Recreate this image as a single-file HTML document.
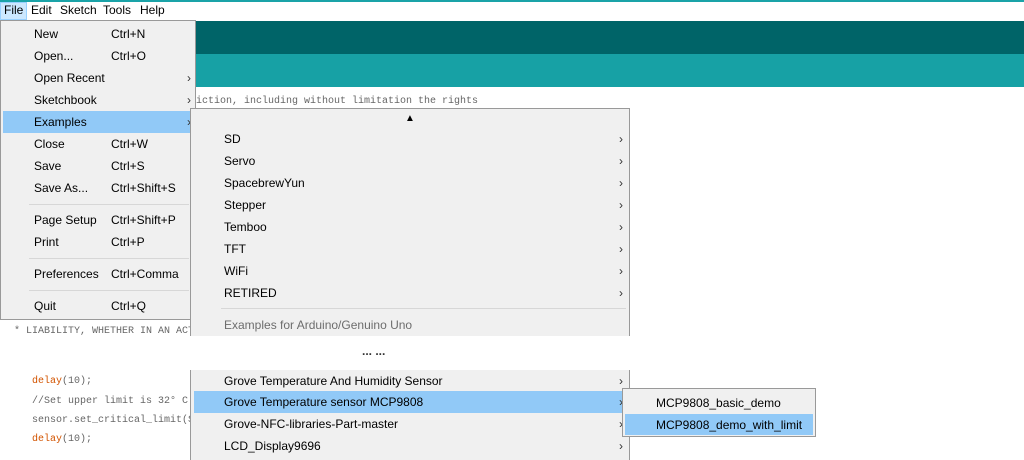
<!DOCTYPE html>
<html><head><style>
*{margin:0;padding:0;box-sizing:border-box}
body{width:1024px;height:451px;position:relative;overflow:hidden;background:#fff;font-family:"Liberation Sans",sans-serif;font-size:12px;color:#000}
.a{position:absolute;white-space:nowrap}
.code{font-family:"Liberation Mono","Noto Serif CJK SC",monospace;font-size:10px;color:#666}
.menu{position:absolute;background:#f0f0f0;border:1px solid #999}
.it{position:absolute;height:22px;line-height:22px;white-space:nowrap}
.ar{position:absolute;font-size:12px;color:#333}
.sep{position:absolute;height:1px;background:#d7d7d7}
.hl{position:absolute;background:#91c9f7}
</style></head><body>
<div class="a" style="left:0;top:0;width:1024px;height:2px;background:#1aa3a8"></div>
<div class="a" style="left:0;top:2px;width:27px;height:18px;background:#cce8ff;border:1px solid #99d1ff"></div>
<div class="a" style="left:4px;top:3px;font-size:12px">File</div>
<div class="a" style="left:31px;top:3px">Edit</div>
<div class="a" style="left:60px;top:3px">Sketch</div>
<div class="a" style="left:103px;top:3px">Tools</div>
<div class="a" style="left:140px;top:3px">Help</div>
<div class="a" style="left:196px;top:21px;width:828px;height:33px;background:#006468"></div>
<div class="a" style="left:196px;top:54px;width:828px;height:33px;background:#17a1a5"></div>
<div class="a code" style="left:190px;top:96px">riction, including without limitation the rights</div>
<div class="a code" style="left:14px;top:326px">* LIABILITY, WHETHER IN AN ACT</div>
<div class="a code" style="left:32px;top:376px"><span style="color:#d35400">delay</span>(10);</div>
<div class="a code" style="left:32px;top:396px">//Set upper limit is 32° C</div>
<div class="a code" style="left:32px;top:415px">sensor.set_critical_limit(S</div>
<div class="a code" style="left:32px;top:434px"><span style="color:#d35400">delay</span>(10);</div>

<div class="menu" style="left:0;top:20px;width:196px;height:300px">
<div class="hl" style="left:2px;top:90px;width:190px;height:22px"></div>
<div class="it" style="left:33px;top:2px">New</div><div class="it" style="left:110px;top:2px">Ctrl+N</div>
<div class="it" style="left:33px;top:24px">Open...</div><div class="it" style="left:110px;top:24px">Ctrl+O</div>
<div class="it" style="left:33px;top:46px">Open Recent</div><div class="ar" style="left:186px;top:50px">›</div>
<div class="it" style="left:33px;top:68px">Sketchbook</div><div class="ar" style="left:186px;top:72px">›</div>
<div class="it" style="left:33px;top:90px">Examples</div><div class="ar" style="left:186px;top:94px">›</div>
<div class="it" style="left:33px;top:112px">Close</div><div class="it" style="left:110px;top:112px">Ctrl+W</div>
<div class="it" style="left:33px;top:134px">Save</div><div class="it" style="left:110px;top:134px">Ctrl+S</div>
<div class="it" style="left:33px;top:156px">Save As...</div><div class="it" style="left:110px;top:156px">Ctrl+Shift+S</div>
<div class="sep" style="left:28px;top:183px;width:160px"></div>
<div class="it" style="left:33px;top:188px">Page Setup</div><div class="it" style="left:110px;top:188px">Ctrl+Shift+P</div>
<div class="it" style="left:33px;top:210px">Print</div><div class="it" style="left:110px;top:210px">Ctrl+P</div>
<div class="sep" style="left:28px;top:237px;width:160px"></div>
<div class="it" style="left:33px;top:242px">Preferences</div><div class="it" style="left:110px;top:242px">Ctrl+Comma</div>
<div class="sep" style="left:28px;top:269px;width:160px"></div>
<div class="it" style="left:33px;top:274px">Quit</div><div class="it" style="left:110px;top:274px">Ctrl+Q</div>
</div>

<div class="menu" style="left:190px;top:108px;width:440px;height:228px;border-bottom:none">
<div class="a" style="left:214px;top:4px;font-size:10px">▲</div>
<div class="it" style="left:33px;top:19px">SD</div><div class="ar" style="left:428px;top:23px">›</div>
<div class="it" style="left:33px;top:41px">Servo</div><div class="ar" style="left:428px;top:45px">›</div>
<div class="it" style="left:33px;top:63px">SpacebrewYun</div><div class="ar" style="left:428px;top:67px">›</div>
<div class="it" style="left:33px;top:85px">Stepper</div><div class="ar" style="left:428px;top:89px">›</div>
<div class="it" style="left:33px;top:107px">Temboo</div><div class="ar" style="left:428px;top:111px">›</div>
<div class="it" style="left:33px;top:129px">TFT</div><div class="ar" style="left:428px;top:133px">›</div>
<div class="it" style="left:33px;top:151px">WiFi</div><div class="ar" style="left:428px;top:155px">›</div>
<div class="it" style="left:33px;top:173px">RETIRED</div><div class="ar" style="left:428px;top:177px">›</div>
<div class="sep" style="left:30px;top:199px;width:405px"></div>
<div class="it" style="left:33px;top:205px;color:#6d6d6d">Examples for Arduino/Genuino Uno</div>
</div>
<div class="a" style="left:362px;top:344px;font-size:12px;font-weight:bold;color:#333">... ...</div>

<div class="menu" style="left:190px;top:370px;width:440px;height:90px;border-top:none;border-bottom:none">
<div class="hl" style="left:3px;top:21px;width:434px;height:22px"></div>
<div class="it" style="left:33px;top:0px">Grove Temperature And Humidity Sensor</div><div class="ar" style="left:428px;top:4px">›</div>
<div class="it" style="left:33px;top:21px">Grove Temperature sensor MCP9808</div><div class="ar" style="left:428px;top:25px">›</div>
<div class="it" style="left:33px;top:43px">Grove-NFC-libraries-Part-master</div><div class="ar" style="left:428px;top:47px">›</div>
<div class="it" style="left:33px;top:65px">LCD_Display9696</div><div class="ar" style="left:428px;top:69px">›</div>
</div>

<div class="menu" style="left:622px;top:388px;width:194px;height:49px">
<div class="hl" style="left:2px;top:25px;width:188px;height:21px"></div>
<div class="it" style="left:33px;top:3px">MCP9808_basic_demo</div>
<div class="it" style="left:33px;top:25px">MCP9808_demo_with_limit</div>
</div>
</body></html>
